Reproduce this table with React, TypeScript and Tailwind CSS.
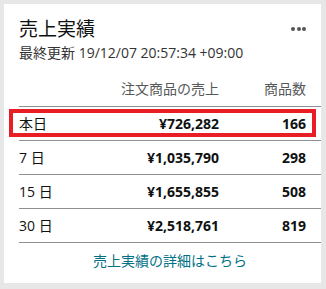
const ROWS = [
  { label: "本日", sales: "726,282", count: "166", highlight: true },
  { label: "7 日", sales: "1,035,790", count: "298" },
  { label: "15 日", sales: "1,655,855", count: "508" },
  { label: "30 日", sales: "2,518,761", count: "819" },
];

export default function App() {
  return (
    <div
      className="w-[326px] h-[289px] bg-[#e7e7e7] pt-[4px] pl-[4px]"
      style={{ fontFamily: '"Open Sans", "Noto Sans CJK JP", sans-serif' }}
    >
      <div className="w-[317px] h-[279px] bg-white pl-[15px] pt-[13px] text-[#0f1111]">
        {/* header */}
        <div className="flex items-start justify-between pr-[15px]">
          <div className="text-[19px] leading-[24px]">売上実績</div>
          <div className="flex gap-[1.5px] mt-[10px]">
            <span className="w-[4px] h-[4px] rounded-full bg-[#555]" />
            <span className="w-[4px] h-[4px] rounded-full bg-[#555]" />
            <span className="w-[4px] h-[4px] rounded-full bg-[#555]" />
          </div>
        </div>
        <div className="mt-[3px] text-[14px] leading-[18px] text-[#333]">
          最終更新 19/12/07 20:57:34 +09:00
        </div>

        {/* table */}
        <div className="mt-[18px] flex pr-[15px] pb-[8px] border-b border-[#8d9194] text-[14px] leading-[18px] text-[#565959]">
          <div className="flex-1" />
          <div className="text-right">注文商品の売上</div>
          <div className="w-[87px] text-right">商品数</div>
        </div>
        {ROWS.map((r) => (
          <div
            key={r.label}
            className="relative flex items-center h-[34px] pr-[15px] border-b border-[#8d9194] text-[14px]"
          >
            <div className="flex-1">{r.label}</div>
            <div className="text-right font-bold">¥{r.sales}</div>
            <div className="w-[87px] text-right font-bold">{r.count}</div>
            {r.highlight && (
              <div className="absolute left-[-10px] right-[5px] top-[2px] bottom-[3px] border-[4px] border-[#e81d25]" />
            )}
          </div>
        ))}
        <div className="mt-[9px] text-center text-[14px] leading-[18px] text-[#007185]">
          売上実績の詳細はこちら
        </div>
      </div>
    </div>
  );
}
